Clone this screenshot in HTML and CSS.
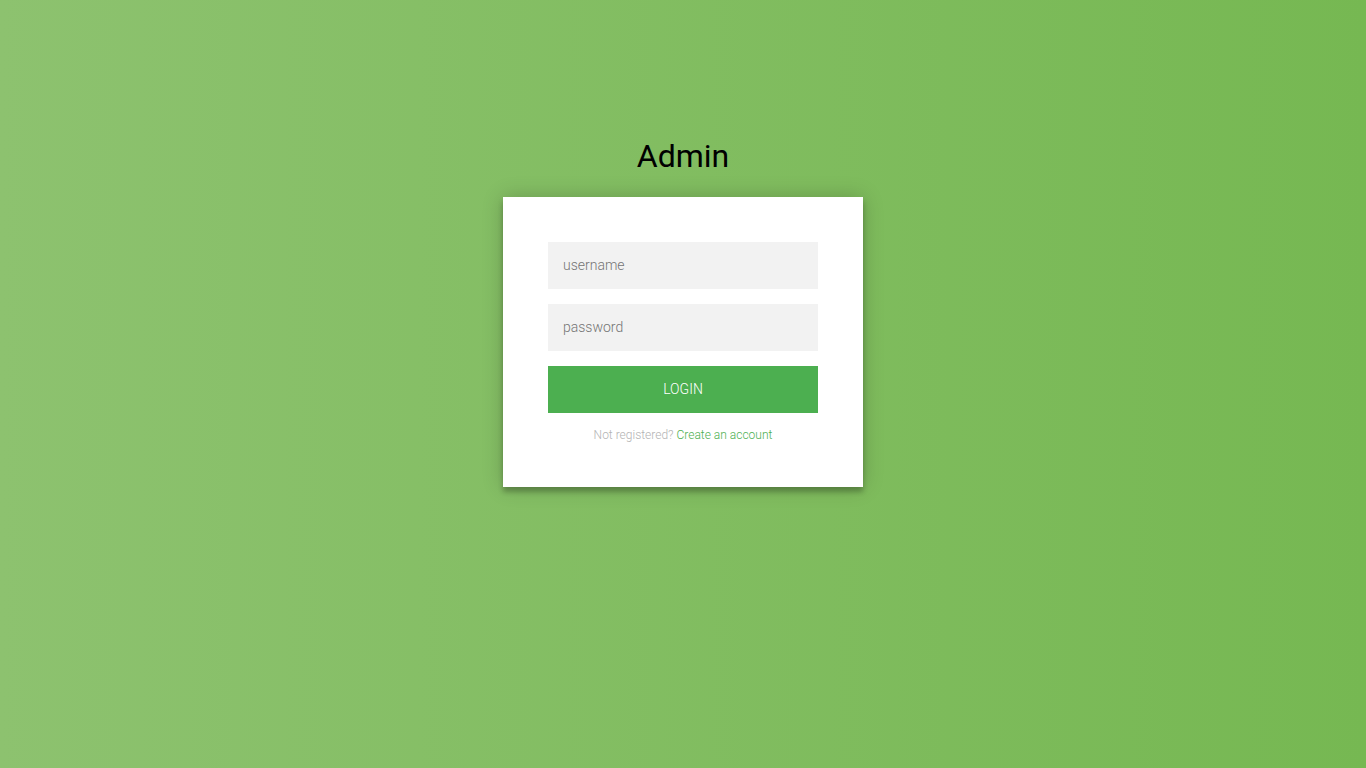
FILE: index.html
```html
<!DOCTYPE html>
<html>
<head>
<meta charset="utf-8">
<link rel="stylesheet" href="styles.css">
</head>
<body>
<div class="login-page">
  <h1 class="title">Admin</h1>
  <div class="form">
    <form class="login-form">
      <input type="text" placeholder="username">
      <input type="password" placeholder="password">
      <button type="button">login</button>
      <p class="message">Not registered? <a href="#">Create an account</a></p>
    </form>
  </div>
</div>
</body>
</html>
```
FILE: styles.css
```css
html, body {
  margin: 0;
  padding: 0;
  height: 100%;
}
body {
  background: linear-gradient(to left, #76b852, #8dc26f);
  font-family: Roboto, "Liberation Sans", sans-serif;
  -webkit-font-smoothing: antialiased;
}
.login-page {
  display: flex;
  flex-direction: column;
  align-items: center;
  padding-top: 137px;
}
.title {
  margin: 0 0 22px;
  font-size: 32px;
  line-height: 38px;
  font-weight: 400;
  color: #000;
}
.form {
  width: 360px;
  box-sizing: border-box;
  background: #fff;
  padding: 45px;
  text-align: center;
  box-shadow: 0 0 20px 0 rgba(0,0,0,0.2), 0 5px 5px 0 rgba(0,0,0,0.24);
}
.login-form {
  display: flex;
  flex-direction: column;
}
.login-form input {
  font-family: Roboto, "Liberation Sans", sans-serif;
  font-weight: 300;
  outline: 0;
  background: #f2f2f2;
  width: 100%;
  border: 0;
  margin: 0 0 15px;
  padding: 14px 15px 16px;
  box-sizing: border-box;
  font-size: 14px;
  line-height: 17px;
  height: 47px;
}
.login-form input::placeholder {
  color: #757575;
}
.login-form button {
  font-family: Roboto, "Liberation Sans", sans-serif;
  font-weight: 300;
  text-transform: uppercase;
  outline: 0;
  background: #4caf50;
  width: 100%;
  border: 0;
  padding: 15px;
  color: #fff;
  font-size: 14px;
  line-height: 17px;
  height: 47px;
  cursor: pointer;
}
.message {
  margin: 15px 0 0;
  color: #b3b3b3;
  font-size: 12px;
  line-height: 14px;
  font-weight: 300;
}
.message a {
  color: #4caf50;
  text-decoration: none;
}
```
